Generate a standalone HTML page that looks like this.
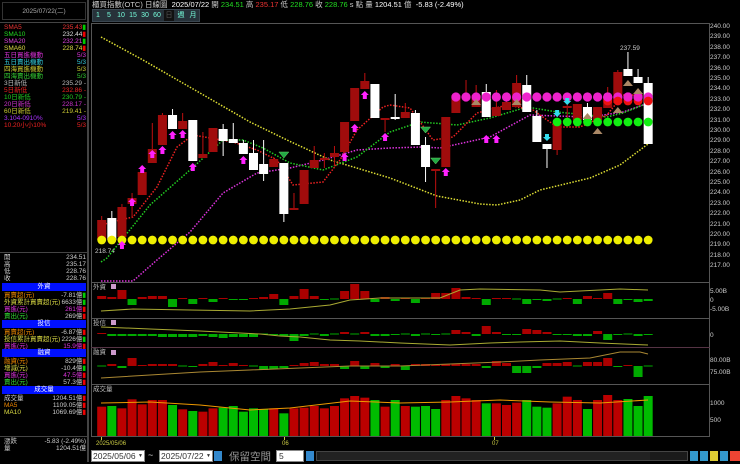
<!DOCTYPE html>
<html><head><meta charset="utf-8">
<style>
*{margin:0;padding:0;box-sizing:border-box}
body{width:740px;height:462px;background:#000;overflow:hidden;position:relative;font-family:"Liberation Sans","Noto Sans CJK TC",sans-serif;color:#ccc}
.a{position:absolute;white-space:nowrap}
.hd{position:absolute;left:2px;width:84px;height:8px;background:#0010ff;color:#fff;font-size:6.5px;line-height:8px;text-align:center}
.row{position:absolute;left:4px;width:82px;font-size:6.5px;line-height:7px}
.row span{float:right}
.btn{position:absolute;top:10px;height:11px;font-size:7px;line-height:11px;color:#7fd;text-align:center}
</style></head><body>
<div class="a" style="left:0;top:0;width:89px;height:462px;border-right:2px solid #444"></div>
<div class="a" style="left:2px;top:2px;width:84px;height:18px;border:1px solid #333;font-size:6.5px;color:#aaa;text-align:center;line-height:18px">2025/07/22(二)</div>
<div class="a" style="left:0;top:22px;width:89px;height:1px;background:#444"></div>
<div class="row" style="top:24px;color:#e33">SMA5<span>235.43<b style="color:#0c0">▮</b></span></div>
<div class="row" style="top:31px;color:#2d2">SMA10<span style="color:#ddd">232.44<b style="color:#e00">▮</b></span></div>
<div class="row" style="top:38px;color:#d4d">SMA20<span>232.21<b style="color:#0c0">▮</b></span></div>
<div class="row" style="top:45px;color:#dd4">SMA60<span>228.74<b style="color:#e00">▮</b></span></div>
<div class="row" style="top:52px;color:#d3d">五日買進機動<span>5/3</span></div>
<div class="row" style="top:59px;color:#3cd">五日賣出機動<span>5/3</span></div>
<div class="row" style="top:66px;color:#cc3">四海買進機動<span>5/3</span></div>
<div class="row" style="top:73px;color:#3c3">四海賣出機動<span>5/3</span></div>
<div class="row" style="top:80px;color:#bbb">3日新低<span>235.29 -</span></div>
<div class="row" style="top:87px;color:#e22">5日新低<span>232.86 -</span></div>
<div class="row" style="top:94px;color:#2c2">10日新低<span>230.79 -</span></div>
<div class="row" style="top:101px;color:#c3c">20日新低<span>228.17 -</span></div>
<div class="row" style="top:108px;color:#cc3">60日新低<span>219.41 -</span></div>
<div class="row" style="top:115px;color:#a3f">3.104-0910%<span>5/3</span></div>
<div class="row" style="top:122px;color:#e22">10.20小小10%<span>5/3</span></div>
<div class="a" style="left:0;top:252px;width:89px;height:1px;background:#444"></div>
<div class="row" style="top:254px;color:#ccc">開<span>234.51</span></div>
<div class="row" style="top:261px;color:#ccc">高<span>235.17</span></div>
<div class="row" style="top:268px;color:#ccc">低<span>228.76</span></div>
<div class="row" style="top:275px;color:#ccc">收<span>228.76</span></div>
<div class="hd" style="top:283px">外資</div>
<div class="row" style="top:292px;color:#e80">買賣超(元)<span style="color:#ccc">-7.81億<b style="color:#0c0">▮</b></span></div>
<div class="row" style="top:299px;color:#dd4">外資累計買賣超(元)<span style="color:#ccc">6633億<b style="color:#0c0">▮</b></span></div>
<div class="row" style="top:306px;color:#d3d">買進(元)<span>261億<b style="color:#e00">▮</b></span></div>
<div class="row" style="top:313px;color:#3d3">賣出(元)<span style="color:#ccc">269億<b style="color:#e00">▮</b></span></div>
<div class="hd" style="top:320px">投信</div>
<div class="row" style="top:329px;color:#e80">買賣超(元)<span style="color:#ccc">-6.87億<b style="color:#e00">▮</b></span></div>
<div class="row" style="top:336px;color:#dd4">投信累計買賣超(元)<span style="color:#ccc">2226億<b style="color:#0c0">▮</b></span></div>
<div class="row" style="top:343px;color:#d3d">買進(元)<span>15.9億<b style="color:#e00">▮</b></span></div>
<div class="hd" style="top:349px">融資</div>
<div class="row" style="top:358px;color:#e80">融資(元)<span style="color:#ccc">829億<b style="color:#e00">▮</b></span></div>
<div class="row" style="top:365px;color:#dd4">增減(元)<span style="color:#ccc">-10.4億<b style="color:#0c0">▮</b></span></div>
<div class="row" style="top:372px;color:#d3d">買進(元)<span>47.5億<b style="color:#e00">▮</b></span></div>
<div class="row" style="top:379px;color:#3d3">賣出(元)<span style="color:#ccc">57.3億<b style="color:#e00">▮</b></span></div>
<div class="hd" style="top:386px">成交量</div>
<div class="row" style="top:395px;color:#ccc">成交量<span>1204.51億<b style="color:#e00">▮</b></span></div>
<div class="row" style="top:402px;color:#e80">MA5<span style="color:#ccc">1109.05億<b style="color:#e00">▮</b></span></div>
<div class="row" style="top:409px;color:#dd4">MA10<span style="color:#ccc">1069.69億<b style="color:#e00">▮</b></span></div>
<div class="a" style="left:0;top:436px;width:89px;height:1px;background:#444"></div>
<div class="row" style="top:438px;color:#ccc">漲跌<span>-5.83 (-2.49%)</span></div>
<div class="row" style="top:445px;color:#ccc">量<span>1204.51億</span></div>

<div class="a" style="left:92px;top:0;font-size:7.5px;line-height:9px;color:#ccc">櫃買指數(OTC)</div>
<div class="a" style="left:145px;top:0;font-size:7.5px;line-height:9px;color:#ccc">日線圖 &nbsp;<span style="color:#fff">2025/07/22</span> 開 <span style="color:#2d2">234.51</span> 高 <span style="color:#e33">235.17</span> 低 <span style="color:#2d2">228.76</span> 收 <span style="color:#2d2">228.76</span> s 點 量 <span style="color:#fff">1204.51</span> 億 &nbsp;<span style="color:#fff">-5.83 (-2.49%)</span></div>
<div class="a" style="left:92px;top:9px;width:108px;height:13px;background:#27323a;border:1px solid #3a4650"></div>
<div class="btn" style="left:93px;width:10px">1</div>
<div class="btn" style="left:104px;width:10px">5</div>
<div class="btn" style="left:115px;width:12px">10</div>
<div class="btn" style="left:127px;width:12px">15</div>
<div class="btn" style="left:139px;width:12px">30</div>
<div class="btn" style="left:151px;width:12px">60</div>
<div class="btn" style="left:164px;width:10px;background:#111;color:#555">日</div>
<div class="btn" style="left:175px;width:12px">週</div>
<div class="btn" style="left:187px;width:12px">月</div>

<svg class="a" style="left:0;top:0" width="740" height="462" id="s">
<g stroke="#555" stroke-width="1" fill="none">
<rect x="91.5" y="23.5" width="618" height="413"/>
<line x1="91" y1="282.5" x2="710" y2="282.5"/>
<line x1="91" y1="318.5" x2="710" y2="318.5"/>
<line x1="91" y1="347.5" x2="710" y2="347.5" stroke="#534"/>
<line x1="91" y1="384.5" x2="710" y2="384.5"/>
</g>
<g font-size="6.5" fill="#ccc" font-family="Liberation Sans, sans-serif">
<text x="710" y="28">240.00</text><text x="710" y="38">239.00</text><text x="710" y="49">238.00</text><text x="710" y="59">237.00</text><text x="710" y="70">236.00</text><text x="710" y="80">235.00</text><text x="710" y="90">234.00</text><text x="710" y="101">233.00</text><text x="710" y="111">232.00</text><text x="710" y="122">231.00</text><text x="710" y="132">230.00</text><text x="710" y="142">229.00</text><text x="710" y="153">228.00</text><text x="710" y="163">227.00</text><text x="710" y="174">226.00</text><text x="710" y="184">225.00</text><text x="710" y="194">224.00</text><text x="710" y="205">223.00</text><text x="710" y="215">222.00</text><text x="710" y="226">221.00</text><text x="710" y="236">220.00</text><text x="710" y="246">219.00</text><text x="710" y="257">218.00</text><text x="710" y="267">217.00</text>
<text x="710" y="293">5.00B</text><text x="710" y="302">0</text><text x="710" y="311">-5.00B</text>
<text x="710" y="337">0</text>
<text x="710" y="362">80.00B</text><text x="710" y="374">75.00B</text>
<text x="710" y="405">1000</text><text x="710" y="422">500</text>
<text x="620" y="50">237.59</text><text x="95" y="253">218.74</text>
<text x="93" y="289" fill="#bbb">外資</text><text x="93" y="325" fill="#bbb">投信</text><text x="93" y="354" fill="#bbb">融資</text><text x="93" y="391" fill="#bbb">成交量</text>
<text x="96" y="445" fill="#cc4" font-size="6">2025/05/06</text><text x="282" y="445" fill="#cc4" font-size="6">06</text><text x="492" y="445" fill="#cc4" font-size="6">07</text>
</g>
<g fill="#c9c"><rect x="111" y="284" width="5" height="5"/><rect x="111" y="320" width="5" height="5"/><rect x="111" y="350" width="5" height="5"/></g>
<g stroke="#cc4"><line x1="101.5" y1="437" x2="101.5" y2="440"/><line x1="284.5" y1="437" x2="284.5" y2="440"/><line x1="494.5" y1="437" x2="494.5" y2="440"/></g>
<g id="dyn"></g>
</svg>

<div class="a" style="left:91px;top:450px;width:54px;height:12px;background:#fff;border:1px solid #888;color:#333;font-size:8.5px;line-height:11px;padding-left:1px">2025/05/06<span style="position:absolute;right:1px;font-size:5px">▼</span></div>
<div class="a" style="left:148px;top:450px;color:#ccc;font-size:9px">~</div>
<div class="a" style="left:159px;top:450px;width:54px;height:12px;background:#fff;border:1px solid #888;color:#333;font-size:8.5px;line-height:11px;padding-left:1px">2025/07/22<span style="position:absolute;right:1px;font-size:5px">▼</span></div>
<div class="a" style="left:214px;top:451px;width:8px;height:10px;background:#38c"></div>
<div class="a" style="left:229px;top:449px;color:#999;font-size:10.5px">保留空間</div>
<div class="a" style="left:276px;top:450px;width:28px;height:12px;background:#fff;border:1px solid #888;color:#333;font-size:8.5px;line-height:11px;padding-left:2px">5</div>
<div class="a" style="left:306px;top:451px;width:8px;height:10px;background:#38c"></div>
<div class="a" style="left:316px;top:451px;width:372px;height:10px;background:#1a1a1a;border:1px solid #444"></div>
<div class="a" style="left:320px;top:452px;width:330px;height:8px;background:#222"></div>
<div class="a" style="left:690px;top:451px;width:50px;height:10px;background:linear-gradient(90deg,#39c 0 8px,#000 8px 10px,#39c 10px 18px,#000 18px 20px,#dc3 20px 28px,#000 28px 30px,#39c 30px 38px,#000 38px 40px,#e43 40px 50px)"></div>

<script>
const g=document.getElementById('dyn');
let h='';
const X=i=>101.7+10.12*i;
const C=[[220,240,216,242,'r'],[218,240,211,240,'w'],[207,237,204,237,'r'],[198,204,193,218,'r'],[172,195,167,195,'r'],[149,163,123,163,'r'],[115,145,113,145,'r'],[115,129,109,129,'w'],[121,129,113,129,'r'],[120,161,120,161,'w'],[154,158,132,158,'r'],[128,152,128,152,'r'],[129,141,124,156,'w'],[139,143,123,143,'w'],[143,154,140,154,'w'],[153,170,140,170,'w'],[164,174,140,181,'w'],[159,167,157,167,'r'],[163,214,163,222,'w'],[208,210,193,210,'r'],[170,204,170,204,'r'],[160,168,146,168,'r'],[158,160,153,168,'r'],[153,157,146,166,'r'],[122,152,122,152,'r'],[88,121,88,121,'r'],[81,89,73,89,'r'],[84,118,84,118,'w'],[118,120,118,132,'r'],[117,119,94,120,'w'],[112,118,103,118,'r'],[113,145,110,145,'w'],[145,167,137,182,'w'],[169,171,169,208,'r'],[117,167,117,167,'r'],[95,113,95,113,'r'],[96,98,80,100,'r'],[95,107,85,107,'r'],[92,117,84,117,'w'],[107,116,90,116,'r'],[102,110,100,110,'r'],[83,107,75,107,'r'],[85,112,75,112,'w'],[116,142,110,142,'w'],[144,149,144,168,'w'],[123,150,123,155,'r'],[106,108,100,120,'r'],[104,120,104,120,'r'],[107,120,103,120,'w'],[107,120,107,120,'r'],[97,108,87,108,'r'],[72,103,70,103,'r'],[69,76,52,76,'w'],[77,83,69,83,'w'],[83,144,77,144,'w']];
const line=(pts,col,dash,w)=>`<polyline points="${pts.map(p=>p.join(',')).join(' ')}" fill="none" stroke="${col}" stroke-width="${w||1.5}" ${dash?'stroke-dasharray="1.5 1.5"':''}/>`;
h+=line([[101,37],[143,60],[200,93],[250,122],[287,140],[330,160],[390,178],[437,196],[480,204],[497,205],[520,200],[540,190],[590,178],[620,165],[640,150],[648,144]],'#dd3',1);
h+=line([[101,281],[133,281],[157,260],[190,232],[223,193],[257,173],[290,168],[323,160],[357,150],[390,148],[423,147],[440,148],[490,137],[530,115],[557,116],[590,117],[623,112],[643,105],[648,104]],'#d3d',1);
h+=line([[101,262],[107,258],[150,205],[190,170],[223,140],[243,140],[263,148],[290,163],[323,170],[357,157],[390,132],[420,122],[457,125],[490,118],[527,107],[557,112],[607,117],[623,113],[648,103]],'#2c2',1);
h+=line([[101,228],[107,223],[133,217],[157,187],[177,147],[193,135],[210,138],[233,142],[257,150],[277,160],[293,185],[323,182],[340,160],[357,130],[383,107],[390,105],[410,108],[433,140],[453,137],[477,113],[507,105],[533,110],[557,127],[580,127],[607,115],[623,95],[648,95]],'#e22',1);
C.forEach((c,i)=>{const x=X(i);const col=c[4]=='r'?'#a00c0c':'#fff';
h+=`<line x1="${x}" y1="${c[2]}" x2="${x}" y2="${c[3]}" stroke="${c[4]=='r'?'#c01010':'#fff'}" stroke-width="1"/>`;
h+=`<rect x="${x-4.5}" y="${c[0]}" width="9" height="${Math.max(1.5,c[1]-c[0])}" fill="${col}"/>`;
h+=`<circle cx="${x}" cy="240" r="4.4" fill="#ee0"/>`;
if(i>=35)h+=`<circle cx="${x}" cy="97" r="4.6" fill="#e2c"/>`;
if(i>=50)h+=`<circle cx="${x}" cy="101" r="4.4" fill="#e11"/>`;
if(i>=45)h+=`<circle cx="${x}" cy="122" r="4.4" fill="#1e1"/>`;
});
[50,52,53].forEach(i=>{h+=`<circle cx="${X(i)}" cy="97" r="4.6" fill="#e2c"/>`});
const up=(i,y)=>{const x=X(i);h+=`<path d="M${x} ${y}l4 4h-2v4h-4v-4h-2z" fill="#f2f"/>`};
const dn=(i,y,c)=>{const x=X(i);h+=`<path d="M${x-2} ${y}h4v3h2l-4 4l-4-4h2z" fill="${c}"/>`};
const tri=(i,y,c)=>{const x=X(i);h+=`<path d="M${x-5} ${y}h10l-5 6z" fill="${c}" stroke="#6c6" stroke-width=".5"/>`};
const ut=(i,y)=>{const x=X(i);h+=`<path d="M${x-5} ${y+6}h10l-5-6z" fill="#a86"/>`};
[[2,241],[3,198],[4,165],[5,150],[6,146],[7,131],[8,130],[9,163],[14,156],[24,153],[25,124],[26,91],[28,133],[34,168],[38,135],[39,135]].forEach(a=>up(a[0],a[1]));
tri(18,152,'#2a4');tri(32,127,'#2a4');tri(33,158,'#2a4');
dn(44,134,'#3de');dn(45,110,'#3de');dn(46,98,'#3de');
[[37,99],[41,99],[48,113],[49,128],[51,107],[52,80],[53,88]].forEach(a=>ut(a[0],a[1]));
const V=[[395,'r'],[393,'g'],[400,'r'],[373,'r'],[388,'r'],[375,'r'],[375,'r'],[390,'g'],[403,'r'],[408,'g'],[410,'r'],[400,'r'],[398,'g'],[393,'g'],[410,'g'],[400,'g'],[403,'g'],[400,'r'],[415,'g'],[400,'r'],[398,'r'],[393,'r'],[400,'r'],[393,'r'],[370,'r'],[363,'r'],[368,'r'],[375,'g'],[395,'r'],[375,'g'],[393,'r'],[395,'g'],[393,'g'],[402,'g'],[375,'r'],[363,'r'],[370,'r'],[375,'r'],[385,'g'],[385,'r'],[390,'r'],[383,'r'],[375,'g'],[395,'g'],[398,'g'],[385,'r'],[365,'r'],[375,'r'],[402,'g'],[375,'r'],[360,'r'],[375,'r'],[372,'g'],[393,'g'],[363,'g']];
V.forEach((v,i)=>{const y=275+v[0]/3;h+=`<rect x="${X(i)-4.5}" y="${y}" width="9" height="${436-y}" fill="${v[1]=='r'?'#b00':'#0b0'}"/>`});
h+=line([[101,403],[150,402],[200,405],[250,410],[290,408],[350,401],[400,403],[450,402],[500,400],[550,402],[600,403],[648,400]],'#e90',0,1);
const bars=(arr,z)=>arr.forEach((y,i)=>{const x=X(i)-4.5;if(y<z)h+=`<rect x="${x}" y="${y}" width="9" height="${z-y}" fill="#a00"/>`;else if(y>z)h+=`<rect x="${x}" y="${z}" width="9" height="${y-z}" fill="#0a0"/>`;else h+=`<rect x="${x}" y="${z-.5}" width="9" height="1" fill="#0a0"/>`});
bars([296,297,290,305,297,296,296,307,298,304,298,302,298,300,300,298,297,294,305,296,289,296,300,299,291,284,291,302,297,301,298,303,298,293,293,288,297,298,305,298,298,299,304,300,301,299,298,304,296,298,293,304,300,302,301],299);
h+=line([[101,311],[133,309],[190,310],[250,311],[290,309],[330,305],[350,300],[380,298],[440,298],[460,290],[480,289],[540,290],[560,292],[620,289],[648,290]],'#aa3',0,1);
bars([333,336,336,336,336,336,337,337,337,337,336,337,338,337,337,337,334,335,336,341,336,334,336,334,332,334,332,336,336,335,334,336,334,335,334,330,332,336,326,332,335,335,329,330,332,335,335,336,336,331,340,335,334,336,335],334);
h+=line([[101,327],[150,329],[200,331],[260,334],[280,336],[300,337],[330,340],[360,341],[400,343],[450,345],[490,343],[520,342],[560,341],[600,343],[648,345]],'#aa3',0,1);
bars([366,364,368,358,365,364,364,364,366,367,364,362,365,363,365,366,370,369,368,365,363,362,364,364,369,361,369,363,368,364,370,364,364,365,364,364,364,364,368,361,363,373,373,368,363,363,362,366,362,362,358,367,365,377,366],366);
h+=line([[101,378],[150,375],[200,372],[250,370],[300,368],[350,366],[400,366],[450,364],[500,362],[540,360],[590,358],[620,352],[640,352],[648,354]],'#a83',0,1);
g.innerHTML=h;
</script>
</body></html>
